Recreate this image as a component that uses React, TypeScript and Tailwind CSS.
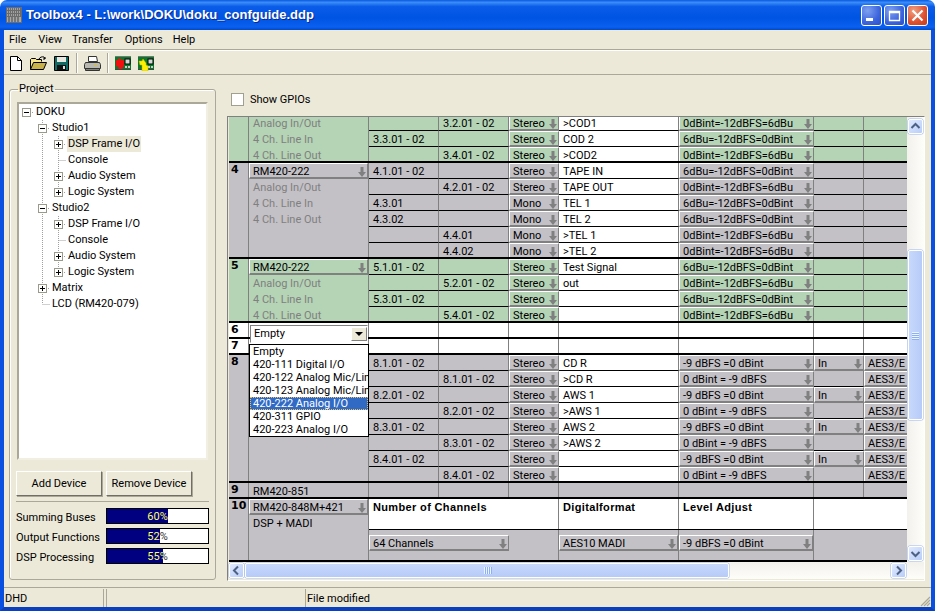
import type { ReactNode } from "react";

const FONT = "font-['Roboto','Liberation_Sans',sans-serif]";

type Row = {
  a?: string;
  b?: string;
  mode: string;
  name?: string;
  level: string;
  dir?: boolean;
  fmt?: boolean;
};

const L6 = "6dBu=-12dBFS=0dBint";
const L0 = "0dBint=-12dBFS=6dBu";
const D9 = "-9 dBFS =0 dBint";
const D0 = "0 dBint = -9 dBFS";

const group3: Row[] = [
  { b: "3.2.01 - 02", mode: "Stereo", name: ">COD1", level: L0 },
  { a: "3.3.01 - 02", mode: "Stereo", name: "COD 2", level: L6 },
  { b: "3.4.01 - 02", mode: "Stereo", name: ">COD2", level: L0 },
];
const group4: Row[] = [
  { a: "4.1.01 - 02", mode: "Stereo", name: "TAPE IN", level: L6 },
  { b: "4.2.01 - 02", mode: "Stereo", name: "TAPE OUT", level: L0 },
  { a: "4.3.01", mode: "Mono", name: "TEL 1", level: L6 },
  { a: "4.3.02", mode: "Mono", name: "TEL 2", level: L6 },
  { b: "4.4.01", mode: "Mono", name: ">TEL 1", level: L0 },
  { b: "4.4.02", mode: "Mono", name: ">TEL 2", level: L0 },
];
const group5: Row[] = [
  { a: "5.1.01 - 02", mode: "Stereo", name: "Test Signal", level: L6 },
  { b: "5.2.01 - 02", mode: "Stereo", name: "out", level: L0 },
  { a: "5.3.01 - 02", mode: "Stereo", level: L6 },
  { b: "5.4.01 - 02", mode: "Stereo", level: L0 },
];
const group8: Row[] = [
  { a: "8.1.01 - 02", mode: "Stereo", name: "CD R", level: D9, dir: true, fmt: true },
  { b: "8.1.01 - 02", mode: "Stereo", name: ">CD R", level: D0, fmt: true },
  { a: "8.2.01 - 02", mode: "Stereo", name: "AWS 1", level: D9, dir: true, fmt: true },
  { b: "8.2.01 - 02", mode: "Stereo", name: ">AWS 1", level: D0, fmt: true },
  { a: "8.3.01 - 02", mode: "Stereo", name: "AWS 2", level: D9, dir: true, fmt: true },
  { b: "8.3.01 - 02", mode: "Stereo", name: ">AWS 2", level: D0, fmt: true },
  { a: "8.4.01 - 02", mode: "Stereo", level: D9, dir: true, fmt: true },
  { b: "8.4.01 - 02", mode: "Stereo", level: D0, fmt: true },
];

const options = [
  "Empty",
  "420-111 Digital I/O",
  "420-122 Analog Mic/Line",
  "420-123 Analog Mic/Line",
  "420-222 Analog I/O",
  "420-311 GPIO",
  "420-223 Analog I/O",
];

const NO = "w-5 shrink-0 border-r border-[#808080] pl-[2px] text-[11px] leading-[14px] font-bold font-['DejaVu_Sans',sans-serif]";

function DownArrow() {
  return (
    <svg width="8" height="10" viewBox="0 0 8 10" className="shrink-0">
      <path d="M2.5 0h3v5H8L4 10 0 5h2.5z" fill="#808080" />
    </svg>
  );
}

function Sel({ children, className = "" }: { children?: ReactNode; className?: string }) {
  return (
    <div
      className={`flex h-4 items-center justify-between overflow-hidden border-t border-l border-white border-r border-r-[#808080] border-b-2 border-b-[#808080] pt-[2px] pr-[1px] pl-[3px] leading-[11px] whitespace-nowrap ${className}`}
    >
      <span>{children}</span>
      <DownArrow />
    </div>
  );
}

function Cell({ children, className = "" }: { children?: ReactNode; className?: string }) {
  return (
    <div
      className={`flex h-4 items-center overflow-hidden border-r border-r-[#808080] border-b border-b-black pt-[2px] pl-[4px] leading-[11px] whitespace-nowrap ${className}`}
    >
      {children}
    </div>
  );
}

function RowLine({ r }: { r: Row }) {
  return (
    <div className="flex h-4">
      <Cell className="w-[70px]">{r.a}</Cell>
      <Cell className="w-[70px]">{r.b}</Cell>
      <Sel className="w-[50px]">{r.mode}</Sel>
      <Cell className="w-[120px] bg-white">{r.name}</Cell>
      <Sel className="w-[135px]">{r.level}</Sel>
      {r.dir ? <Sel className="w-[50px]">In</Sel> : <Cell className="w-[50px]" />}
      {r.fmt ? (
        <div className="flex h-4 w-[44px] items-center overflow-hidden border-t border-l border-white border-b-2 border-b-[#808080] pt-[2px] pl-[3px] leading-[11px] whitespace-nowrap">
          AES3/E
        </div>
      ) : (
        <Cell className="w-[44px] border-r-0" />
      )}
    </div>
  );
}

function Group({
  no,
  device,
  sub,
  rows,
  bg,
  height,
}: {
  no?: string;
  device?: string;
  sub: boolean;
  rows: Row[];
  bg: string;
  height: string;
}) {
  return (
    <div className={`flex overflow-hidden border-b-2 border-black ${bg} ${height}`}>
      <div className={NO}>{no}</div>
      <div className="w-[120px] shrink-0 border-r border-[#808080] text-[#808080]">
        {device && <Sel className="text-black">{device}</Sel>}
        {sub &&
          ["Analog In/Out", "4 Ch. Line In", "4 Ch. Line Out"].map((t) => (
            <div key={t} className="flex h-4 items-center pt-[1px] pl-[4px] leading-[13px]">
              {t}
            </div>
          ))}
      </div>
      <div>
        {rows.map((r, i) => (
          <RowLine key={i} r={r} />
        ))}
      </div>
    </div>
  );
}

function EmptySlot({ no }: { no: string }) {
  return (
    <div className="flex h-4 border-b-2 border-black bg-white">
      <div className={NO}>{no}</div>
      <div className="w-[120px] border-r border-[#808080]" />
      <div className="w-[70px] border-r border-[#808080]" />
      <div className="w-[70px] border-r border-[#808080]" />
      <div className="w-[50px] border-r border-[#808080]" />
      <div className="w-[120px] border-r border-[#808080]" />
      <div className="w-[135px] border-r border-[#808080]" />
      <div className="w-[50px] border-r border-[#808080]" />
    </div>
  );
}

function Slot9() {
  return (
    <div className="flex h-4 border-b-2 border-black bg-[#c3c0c6]">
      <div className={NO}>9</div>
      <div className="w-[120px] border-r border-[#808080] pl-[4px] leading-[17px]">RM420-851</div>
      <div className="w-[70px] border-r border-[#808080]" />
      <div className="w-[70px] border-r border-[#808080]" />
      <div className="w-[50px] border-r border-[#808080]" />
      <div className="w-[120px] border-r border-[#808080]" />
      <div className="w-[135px] border-r border-[#808080]" />
      <div className="w-[50px] border-r border-[#808080]" />
    </div>
  );
}

function Slot10() {
  const head = "text-[11px] font-bold pl-[4px] leading-[17px] font-['Liberation_Sans',sans-serif] tracking-[0.35px]";
  return (
    <div className="flex h-[63px] border-b-2 border-black bg-[#c3c0c6]">
      <div className={NO}>10</div>
      <div className="w-[120px] shrink-0 border-r border-[#808080]">
        <Sel>RM420-848M+421</Sel>
        <div className="flex h-4 items-center pt-[1px] pl-[4px] leading-[13px]">DSP + MADI</div>
      </div>
      <div className="flex-1">
        <div className="flex h-[31px] border-b border-black bg-white">
          <div className={`w-[190px] border-r border-[#808080] ${head}`}>Number of Channels</div>
          <div className={`w-[120px] border-r border-[#808080] ${head}`}>Digitalformat</div>
          <div className={`w-[135px] border-r border-[#808080] ${head}`}>Level Adjust</div>
        </div>
        <div className="flex h-[30px]">
          <div className="w-[190px] border-r border-[#808080] pt-[5px]">
            <Sel className="w-[140px]">64 Channels</Sel>
          </div>
          <div className="w-[120px] border-r border-[#808080] pt-[5px]">
            <Sel>AES10 MADI</Sel>
          </div>
          <div className="w-[135px] border-r border-[#808080] pt-[5px]">
            <Sel>{D9}</Sel>
          </div>
        </div>
      </div>
    </div>
  );
}

function Chevron({ dir }: { dir: "up" | "down" | "left" | "right" }) {
  const d = {
    up: "M3.5 9 7.5 5l4 4",
    down: "M3.5 6l4 4 4-4",
    left: "M9 3.5 5 7.5l4 4",
    right: "M6 3.5l4 4-4 4",
  }[dir];
  return (
    <svg width="15" height="15" viewBox="0 0 15 15">
      <path d={d} fill="none" stroke="#4d6185" strokeWidth="2" />
    </svg>
  );
}

function ScrollBtn({ dir }: { dir: "up" | "down" | "left" | "right" }) {
  return (
    <div className="h-[15px] w-[15px] shrink-0 rounded-[2px] border border-white bg-[linear-gradient(135deg,#e1eafe,#b8cdf7)] shadow-[0_0_0_0.5px_#9db6e6]">
      <div className="-m-px">
        <Chevron dir={dir} />
      </div>
    </div>
  );
}

function Grip({ vertical }: { vertical?: boolean }) {
  return vertical ? (
    <div className="flex w-[7px] flex-col gap-px">
      {[0, 1, 2, 3].map((i) => (
        <div key={i} className="h-px w-full bg-[#eef4fe] shadow-[0_1px_0_#8cb0f8]" />
      ))}
    </div>
  ) : (
    <div className="flex h-[7px] gap-px">
      {[0, 1, 2, 3].map((i) => (
        <div key={i} className="h-full w-px bg-[#eef4fe] shadow-[1px_0_0_#8cb0f8]" />
      ))}
    </div>
  );
}

function Table() {
  return (
    <div className="relative h-[445px] w-[679px] overflow-hidden text-black">
      <div className="-mt-[2px]">
        <Group sub={true} rows={group3} bg="bg-[#b5d3b5]" height="h-[48px]" />
        <Group no="4" device="RM420-222" sub={true} rows={group4} bg="bg-[#c3c0c6]" height="h-[96px]" />
        <Group no="5" device="RM420-222" sub={true} rows={group5} bg="bg-[#b5d3b5]" height="h-[64px]" />
        <EmptySlot no="6" />
        <EmptySlot no="7" />
        <Group no="8" sub={false} rows={group8} bg="bg-[#c3c0c6]" height="h-[128px]" />
        <Slot9 />
        <Slot10 />
      </div>
      {/* open combo box lies over rows 6-8 */}
      <div className="absolute top-[208px] left-[21px] flex h-[18px] w-[118px] items-center border border-[#808080] border-r-white border-b-white bg-white pl-[3px]">
        <span className="flex-1 pt-px">Empty</span>
        <span className="flex h-[14px] w-[16px] items-center justify-center border border-white border-r-[#808080] border-b-[#808080] bg-[#ece9d8]">
          <span className="h-0 w-0 border-x-[4px] border-t-[4px] border-x-transparent border-t-black" />
        </span>
      </div>
      <div className="absolute top-[227px] left-[20px] w-[120px] overflow-hidden border border-black bg-white">
        {options.map((o) => (
          <div
            key={o}
            className={`h-[13px] overflow-hidden pl-[3px] leading-[14px] whitespace-nowrap ${
              o === "420-222 Analog I/O" ? "bg-[#316ac5] text-white outline-1 -outline-offset-1 outline-dotted outline-[#e8c060]" : ""
            }`}
          >
            {o}
          </div>
        ))}
      </div>
    </div>
  );
}

type G = "none" | "I" | "T" | "L" | "plusT" | "plusL" | "minus" | "minusT" | "root";

function TreeGlyph({ g }: { g: G }) {
  const dots = "#a0a0a0";
  const hasBox = g === "plusT" || g === "plusL" || g === "minusT" || g === "root";
  return (
    <svg width="16" height="16" viewBox="0 0 16 16" className="shrink-0">
      {(g === "I" || g === "T" || g === "plusT" || g === "minusT") && (
        <path d="M8.5 0v16" stroke={dots} strokeDasharray="1 1" />
      )}
      {(g === "L" || g === "plusL") && <path d="M8.5 0v8" stroke={dots} strokeDasharray="1 1" />}
      {(g === "T" || g === "L") && <path d="M8.5 8.5H16" stroke={dots} strokeDasharray="1 1" />}
      {hasBox && (
        <>
          <path d="M12 8.5h4" stroke={dots} strokeDasharray="1 1" />
          <rect x="4.5" y="4.5" width="8" height="8" fill="#fff" stroke="#9a9a8a" />
          <path d="M6 8.5h5" stroke="#000" />
          {(g === "plusT" || g === "plusL") && <path d="M8.5 6v5" stroke="#000" />}
        </>
      )}
    </svg>
  );
}

function TreeRow({ glyphs, label, selected }: { glyphs: G[]; label: string; selected?: boolean }) {
  return (
    <div className="flex h-4 items-center">
      {glyphs.map((g, i) => (
        <TreeGlyph key={i} g={g} />
      ))}
      <span className={`ml-[1px] h-4 px-[1px] leading-[16px] whitespace-nowrap ${selected ? "bg-[#ece9d8]" : ""}`}>
        {label}
      </span>
    </div>
  );
}

function StudioRows({ name, select }: { name: string; select?: boolean }) {
  return (
    <>
      <TreeRow glyphs={["none", "minusT"]} label={name} />
      <TreeRow glyphs={["none", "I", "plusT"]} label="DSP Frame I/O" selected={select} />
      <TreeRow glyphs={["none", "I", "T"]} label="Console" />
      <TreeRow glyphs={["none", "I", "plusT"]} label="Audio System" />
      <TreeRow glyphs={["none", "I", "plusL"]} label="Logic System" />
    </>
  );
}

function Bar({ label, pct }: { label: string; pct: number }) {
  return (
    <div className="flex h-[20px] items-start">
      <span className="w-[90px] pt-[3px] leading-[14px] whitespace-nowrap">{label}</span>
      <div className="relative h-[16px] w-[103px] border border-black bg-white text-center leading-[15px] text-[#333]">
        {pct}%
        <div className="absolute inset-y-0 left-0 overflow-hidden bg-[#000080] text-[#ffff66]" style={{ width: `${pct}%` }}>
          <div className="w-[101px] text-center">{pct}%</div>
        </div>
      </div>
    </div>
  );
}

function XpButton({ label, w }: { label: string; w: string }) {
  return (
    <button className={`h-[25px] ${w} border border-white border-r-[#716f64] border-b-[#716f64] bg-[#ece9d8] pt-px shadow-[1px_1px_0_#aca899]`}>
      {label}
    </button>
  );
}

function ToolSep() {
  return <div className="h-[20px] w-[2px] border-l border-[#aca899] bg-white" />;
}

function PcbIcon({ overlay }: { overlay: "red" | "yellow" }) {
  return (
    <svg width="17" height="15" viewBox="0 0 17 15">
      <rect x="0" y="1" width="16" height="12" fill="#0a7a2a" />
      <rect x="0" y="0" width="16" height="1" fill="#777" />
      <rect x="0" y="13" width="16" height="1" fill="#444" />
      <rect x="10" y="3" width="5" height="5" fill="#d8d8d8" stroke="#000" strokeWidth="1" />
      <rect x="10" y="10" width="2" height="2" fill="#cfcfcf" />
      <rect x="13" y="10" width="2" height="2" fill="#cfcfcf" />
      {overlay === "red" ? (
        <path d="M1 4h2l1-2 3 2h2v6l-2 3H4l-1-3-2 1z" fill="#f01010" />
      ) : (
        <path d="M1 5h3l1-2 3 4v2l2 1v5H4V9H2z" fill="#ffef00" stroke="#c8b400" strokeWidth="0.5" />
      )}
    </svg>
  );
}

function Toolbar() {
  return (
    <div className="flex h-[22px] items-center pl-[5px]">
      <svg width="14" height="15" viewBox="0 0 14 15">
        <path d="M1.5.5h7l4 4v10h-11z" fill="#fff" stroke="#000" />
        <path d="M8.5.5v4h4" fill="none" stroke="#000" />
      </svg>
      <svg width="17" height="15" viewBox="0 0 17 15" className="ml-[7px]">
        <path d="M.5 13.5v-10l1-1h4l1 1h5v2" fill="#f6e58a" stroke="#000" />
        <path d="M.5 13.5l3-7h13l-3 7z" fill="#c8b04a" stroke="#000" />
        <path d="M9 3c1-2 3-2.500 5-2l1 2m0-2v2h-2" fill="none" stroke="#000" />
      </svg>
      <svg width="15" height="15" viewBox="0 0 15 15" className="ml-[7px]">
        <path d="M.5.500h14v14h-14z" fill="#0f6b66" stroke="#000" />
        <rect x="3" y="1" width="9" height="5" fill="#e8e8e0" />
        <rect x="3" y="9" width="9" height="5" fill="#111" />
        <rect x="9" y="10" width="2" height="3" fill="#ddd" />
      </svg>
      <div className="ml-[7px]">
        <ToolSep />
      </div>
      <svg width="17" height="15" viewBox="0 0 17 15" className="ml-[6px]">
        <path d="M4.500.5h8l1 5h-9z" fill="#fff" stroke="#333" />
        <path d="M1.500 6.500h14l1 2v4h-16v-4z" fill="#b8b8b0" stroke="#333" />
        <path d="M1.500 12.500h14v2h-14z" fill="#808078" stroke="#333" />
        <path d="M10 8.500h3" stroke="#e0c020" />
      </svg>
      <div className="ml-[6px]">
        <ToolSep />
      </div>
      <div className="ml-[6px] flex">
        <PcbIcon overlay="red" />
      </div>
      <div className="ml-[6px] flex">
        <PcbIcon overlay="yellow" />
      </div>
    </div>
  );
}

function WinButton({ kind }: { kind: "min" | "max" | "close" }) {
  const bg =
    kind === "close"
      ? "bg-[radial-gradient(circle_at_30%_25%,#f0a080,#dc5030_60%,#c83c18)]"
      : "bg-[radial-gradient(circle_at_30%_25%,#7ea0f0,#3c64dc_60%,#2a50c8)]";
  return (
    <div className={`flex h-[21px] w-[21px] items-center justify-center rounded-[3px] border border-white ${bg}`}>
      <svg width="15" height="15" viewBox="0 0 15 15">
        {kind === "min" && <rect x="2" y="10" width="7" height="3" fill="#fff" />}
        {kind === "max" && <path d="M2.500 3.500h10v9h-10zM2.500 4.500h10" fill="none" stroke="#fff" strokeWidth="1.300" />}
        {kind === "close" && <path d="M2.500 2.500l10 10m0-10l-10 10" stroke="#fff" strokeWidth="2.200" />}
      </svg>
    </div>
  );
}

export default function App() {
  return (
    <div className={`flex h-[611px] w-[935px] flex-col overflow-hidden text-[11px] text-black ${FONT}`}>
      <div className="flex h-[30px] shrink-0 items-center rounded-t-[7px] bg-[linear-gradient(180deg,#0a58e0_0%,#3a8cf8_8%,#0a5ce8_22%,#0054e3_60%,#0a60f0_90%,#0048c8_100%)] pr-[7px] pl-[6px]">
        <svg width="16" height="16" viewBox="0 0 16 16">
          <rect x="0" y="0" width="16" height="16" fill="#6c6c6c" />
          <path d="M1 2h14M1 5h14M1 8h14" stroke="#d8d8d8" strokeDasharray="1 1" />
          <rect x="1" y="10" width="14" height="5" fill="#a8a8a8" />
          <path d="M3 10v5M6 10v5M9 10v5M12 10v5" stroke="#444" />
        </svg>
        <span className="ml-[4px] text-[13px] font-bold whitespace-nowrap text-white [text-shadow:1px_1px_0_#0a2a90] font-['Liberation_Sans',sans-serif]">
          {"Toolbox4 - L:\\work\\DOKU\\doku_confguide.ddp"}
        </span>
        <div className="ml-auto flex gap-[2px]">
          <WinButton kind="min" />
          <WinButton kind="max" />
          <WinButton kind="close" />
        </div>
      </div>

      <div className="flex min-h-0 flex-1 border-x-4 border-b-4 border-x-[#0a50e0] border-b-[#0a40c0] bg-[#ece9d8]">
        <div className="flex min-w-0 flex-1 flex-col">
          <div className="flex h-[20px] shrink-0 items-center border-b border-b-[#aca899] pt-px pl-[5px] shadow-[0_1px_0_#fff]">
            <span>File</span>
            <span className="ml-[12px]">View</span>
            <span className="ml-[10px]">Transfer</span>
            <span className="ml-[12px]">Options</span>
            <span className="ml-[10px]">Help</span>
          </div>
          <div className="mt-px shrink-0 border-b border-b-[#aca899] pt-px">
            <Toolbar />
          </div>

          <div className="flex min-h-0 flex-1">
            <div className="w-[223px] shrink-0 pt-[7px] pl-[5px]">
              <fieldset className="h-[498px] w-[207px] rounded-[3px] border border-[#aca899] px-[6px] pb-[2px] shadow-[inset_1px_1px_0_#fff]">
                <legend className="ml-[2px] px-[1px] leading-[14px]">Project</legend>
                <div className="mt-[6px] ml-px h-[358px] w-[191px] border-2 border-[#aca899] border-r-[#f1efe2] border-b-[#f1efe2] bg-white pt-px">
                  <div className="-mt-px -ml-px">
                    <TreeRow glyphs={["root"]} label="DOKU" />
                    <StudioRows name="Studio1" select={true} />
                    <StudioRows name="Studio2" />
                    <TreeRow glyphs={["none", "plusT"]} label="Matrix" />
                    <TreeRow glyphs={["none", "L"]} label="LCD (RM420-079)" />
                  </div>
                </div>
                <div className="mt-[11px] flex gap-[4px]">
                  <XpButton label="Add Device" w="w-[86px]" />
                  <XpButton label="Remove Device" w="w-[86px]" />
                </div>
                <div className="mt-[5px] w-[193px] border-t border-[#aca899] pt-[6px]">
                  <Bar label="Summing Buses" pct={60} />
                  <Bar label="Output Functions" pct={52} />
                  <Bar label="DSP Processing" pct={55} />
                </div>
              </fieldset>
            </div>

            <div className="min-w-0 flex-1">
              <div className="flex h-[41px] items-start pt-[18px] pl-[4px]">
                <span className="h-[13px] w-[13px] border border-[#a0a090] bg-white" />
                <span className="ml-[6px] leading-[14px]">Show GPIOs</span>
              </div>
              <div className="h-[465px] w-[698px] border border-[#808080] border-r-white border-b-white pl-px">
                <div className="flex">
                  <Table />
                  <div className="flex h-[445px] w-[17px] flex-col items-start bg-[linear-gradient(90deg,#f3f1ec,#fdfdfa)] pt-[2px] pl-px">
                    <ScrollBtn dir="up" />
                    <div className="mt-[116px] flex h-[170px] w-[15px] items-center justify-center rounded-[2px] border border-white bg-[linear-gradient(90deg,#c8d8fc,#b6cbf8)] shadow-[0_0_0_0.5px_#9db6e6]">
                      <Grip vertical={true} />
                    </div>
                    <div className="mt-auto mb-[1px]">
                      <ScrollBtn dir="down" />
                    </div>
                  </div>
                </div>
                <div className="flex h-[17px] items-center bg-[linear-gradient(180deg,#f3f1ec,#fdfdfa)] pr-[4px]">
                  <ScrollBtn dir="left" />
                  <div className="ml-px flex h-[15px] w-[484px] items-center justify-center rounded-[2px] border border-white bg-[linear-gradient(180deg,#c8d8fc,#b6cbf8)] shadow-[0_0_0_0.5px_#9db6e6]">
                    <Grip />
                  </div>
                  <div className="ml-auto mr-[14px]">
                    <ScrollBtn dir="right" />
                  </div>
                </div>
              </div>
            </div>
          </div>

          <div className="flex h-[20px] shrink-0 border-t border-[#aca899] pt-[1px]">
            <div className="w-[100px] border-r border-[#aca899] pl-[1px] leading-[20px]">DHD</div>
            <div className="ml-[2px] w-[200px] border-x border-[#aca899]" />
            <div className="flex-1 pl-[1px] leading-[20px]">File modified</div>
            <svg width="12" height="12" viewBox="0 0 12 12" className="mt-auto">
              <path d="M11 2 2 11M11 5l-6 6M11 8l-3 3" stroke="#aca899" strokeWidth="1.200" />
            </svg>
          </div>
        </div>
      </div>
    </div>
  );
}
